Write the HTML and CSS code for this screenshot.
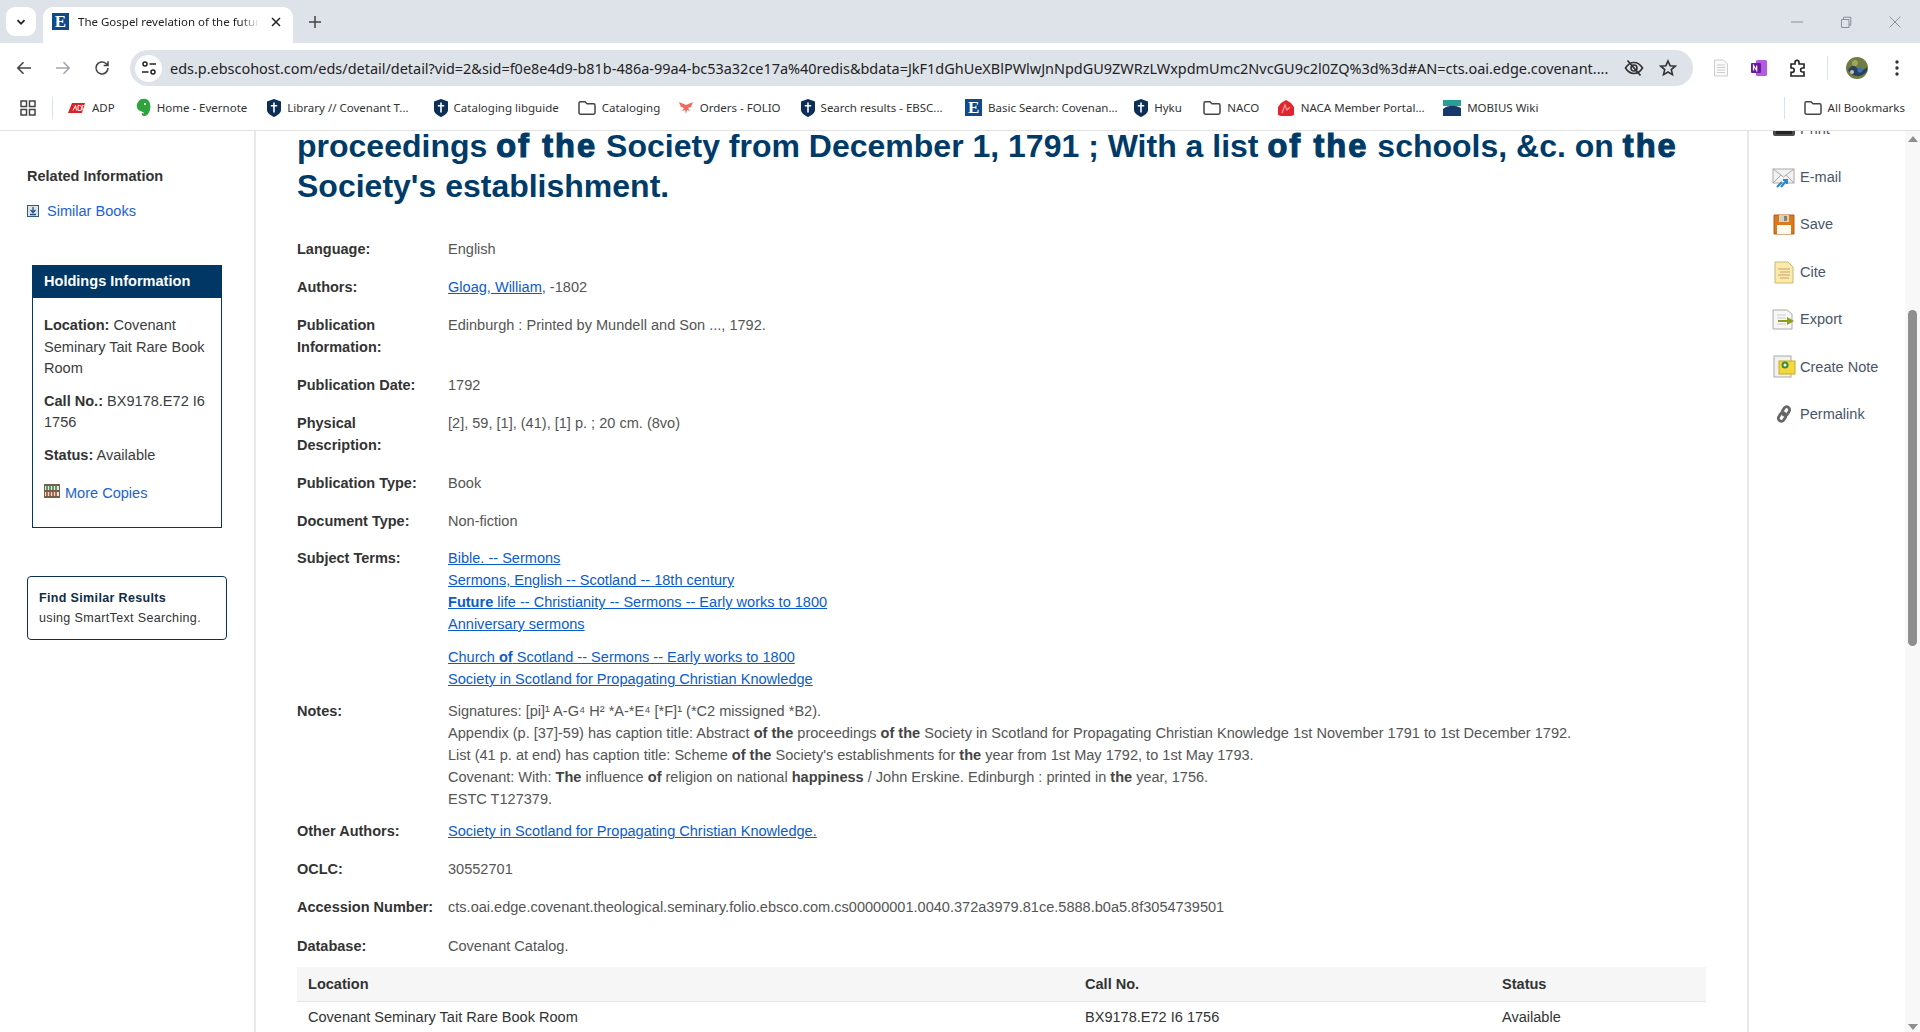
FILE: index.html
```html
<!DOCTYPE html>
<html lang="en">
<head>
<meta charset="utf-8">
<title>The Gospel revelation of the future</title>
<link rel="stylesheet" href="styles.css">
</head>
<body>
<svg class="defs" width="0" height="0" aria-hidden="true">
  <symbol id="shield" viewBox="0 0 14 18"><path d="M7 0 L14 2.5 V11 C14 14.5 10 16.5 7 18 C4 16.5 0 14.5 0 11 V2.5Z" fill="#0d2f55"/><path d="M6.2 3.5h1.6v2.6h2.4v1.5H7.8v6H6.2v-6H3.8V6.1h2.4z" fill="#fff"/></symbol>
  <symbol id="folder" viewBox="0 0 18 16"><path d="M1 3.2C1 2.3 1.6 1.8 2.4 1.8H7l2 2h6.6c.8 0 1.4.6 1.4 1.4v7.6c0 .8-.6 1.4-1.4 1.4H2.4C1.6 14.2 1 13.6 1 12.8Z" fill="none" stroke="#444" stroke-width="1.5"/></symbol>
</svg>
<header class="chrome">
  <div class="tabstrip">
    <button class="tabsearch"><svg width="12" height="12" viewBox="0 0 12 12"><path d="M2.5 4.2 6 7.8l3.5-3.6" fill="none" stroke="#1f1f1f" stroke-width="1.8"/></svg></button>
    <div class="tab">
      <span class="favicon">E</span>
      <span class="tabtitle">The Gospel revelation of the future happiness</span>
      <svg class="tabclose" width="12" height="12" viewBox="0 0 12 12"><path d="M2 2l8 8M10 2l-8 8" stroke="#222" stroke-width="1.5"/></svg>
    </div>
    <svg class="newtab" width="14" height="14" viewBox="0 0 14 14"><path d="M7 1v12M1 7h12" stroke="#444" stroke-width="1.5"/></svg>
    <div class="winctl">
      <svg width="14" height="14" viewBox="0 0 14 14"><path d="M1 7h12" stroke="#8a8f98" stroke-width="1"/></svg>
      <svg width="14" height="14" viewBox="0 0 14 14"><path d="M2.5 4.5h7.5v8H2.5zM4.5 4.5V2.2h7.3v8H10" fill="none" stroke="#8a8f98" stroke-width="1"/></svg>
      <svg width="14" height="14" viewBox="0 0 14 14"><path d="M1.5 1.5l11 11M12.5 1.5l-11 11" stroke="#8a8f98" stroke-width="1"/></svg>
    </div>
  </div>
  <div class="toolbar">
    <div class="navicons">
      <svg width="18" height="18" viewBox="0 0 18 18"><path d="M16 9H3M8.5 3.2 2.8 9l5.7 5.8" fill="none" stroke="#444" stroke-width="1.6"/></svg>
      <svg width="18" height="18" viewBox="0 0 18 18"><path d="M2 9h13M9.5 3.2 15.2 9l-5.7 5.8" fill="none" stroke="#a3a6aa" stroke-width="1.6"/></svg>
      <svg width="18" height="18" viewBox="0 0 18 18"><path d="M15 9a6 6 0 1 1-1.8-4.3L15 6.5M15 2.2v4.3h-4.3" fill="none" stroke="#444" stroke-width="1.6"/></svg>
    </div>
    <div class="omnibox">
      <span class="siteinfo"><svg width="16" height="16" viewBox="0 0 16 16"><circle cx="4" cy="4" r="2" fill="none" stroke="#222" stroke-width="1.5"/><path d="M8.5 4H15M1 12h6.5" stroke="#222" stroke-width="1.5"/><circle cx="12" cy="12" r="2" fill="none" stroke="#222" stroke-width="1.5"/></svg></span>
      <span class="url">eds.p.ebscohost.com/eds/detail/detail?vid=2&amp;sid=f0e8e4d9-b81b-486a-99a4-bc53a32ce17a%40redis&amp;bdata=JkF1dGhUeXBlPWlwJnNpdGU9ZWRzLWxpdmUmc2NvcGU9c2l0ZQ%3d%3d#AN=cts.oai.edge.covenant....</span>
      <svg class="omni-eye" width="20" height="18" viewBox="0 0 20 18"><path d="M1.5 9C4 5 7 3.5 10 3.5S16 5 18.5 9C16 13 13 14.5 10 14.5S4 13 1.5 9Z" fill="none" stroke="#333" stroke-width="1.6"/><circle cx="10" cy="9" r="3" fill="none" stroke="#333" stroke-width="1.6"/><path d="M3.5 1.5l13 15" stroke="#333" stroke-width="1.8"/></svg>
      <svg class="omni-star" width="18" height="18" viewBox="0 0 18 18"><path d="M9 2l2.1 4.7 5.1.5-3.9 3.4 1.2 5L9 13l-4.5 2.6 1.2-5-3.9-3.4 5.1-.5z" fill="none" stroke="#333" stroke-width="1.6"/></svg>
    </div>
    <div class="exticons">
      <svg width="16" height="18" viewBox="0 0 16 18"><path d="M1.5 1h9l4 4v12h-13z" fill="#fafafa" stroke="#ccc"/><path d="M4 6h8M4 8.5h8M4 11h8M4 13.5h8" stroke="#ccc"/></svg>
      <svg width="18" height="18" viewBox="0 0 18 18"><rect x="6" y="1" width="11" height="16" rx="1.5" fill="#b05be0"/><rect x="1" y="4" width="10" height="10" rx="1" fill="#6a1b9a"/><path d="M3.5 11.5v-5l3.2 5v-5" fill="none" stroke="#fff" stroke-width="1.2"/></svg>
      <svg width="18" height="18" viewBox="0 0 18 18"><path d="M2 5h4V3.4a2 2 0 0 1 4 0V5h5v4h-1.4a2 2 0 0 0 0 4H15v4H2v-3.6h1a2.2 2.2 0 0 0 0-4.4H2Z" fill="none" stroke="#222" stroke-width="1.6"/></svg>
      <span class="vsep"></span>
      <svg class="avatar" width="22" height="22" viewBox="0 0 22 22"><circle cx="11" cy="11" r="11" fill="#6f7d45"/><path d="M2 13c3-5 6-5 9-2s6 3 10-1v4a11 11 0 0 1-19-1Z" fill="#27425f"/><circle cx="9" cy="6" r="3" fill="#a7a35c"/><circle cx="14" cy="13" r="2.6" fill="#3d6fb8"/><circle cx="6" cy="15" r="2" fill="#c8c2b0"/></svg>
      <svg width="4" height="16" viewBox="0 0 4 16"><circle cx="2" cy="2" r="1.7" fill="#333"/><circle cx="2" cy="8" r="1.7" fill="#333"/><circle cx="2" cy="14" r="1.7" fill="#333"/></svg>
    </div>
  </div>
  <nav class="bookmarks">
    <span class="bm-apps"><svg width="16" height="16" viewBox="0 0 16 16"><path d="M1 1h5.5v5.5H1zM9.5 1H15v5.5H9.5zM1 9.5h5.5V15H1zM9.5 9.5H15V15H9.5z" fill="none" stroke="#444" stroke-width="1.5"/></svg></span>
    <span class="bm-sep"></span>
    <a class="bm"><svg width="18" height="12" viewBox="0 0 18 12"><path d="M4 1h13l-3 10H0Z" fill="#d8232a"/><path d="M5 8.5 7.5 3.5 8.5 8.5M10 3.5v5h1.6a2.3 2.5 0 0 0 0-5ZM14 8.5v-5h1.5" fill="none" stroke="#fff" stroke-width="1"/></svg>ADP</a>
    <a class="bm"><svg width="16" height="20" viewBox="0 0 16 20"><path d="M4 3C5 .5 10 0 13 2c2 2 3 6 2 10-1 3-3 6-5 6-3 .5-4-2-3-3l2 .5c0-2-4-2-6-4C1.500 9 1 6 4 3Z" fill="#2fa43c"/><circle cx="10" cy="6" r="1" fill="#fff"/></svg>Home - Evernote</a>
    <a class="bm"><svg width="14" height="18"><use href="#shield"/></svg>Library // Covenant T...</a>
    <a class="bm"><svg width="14" height="18"><use href="#shield"/></svg>Cataloging libguide</a>
    <a class="bm"><svg width="18" height="16"><use href="#folder"/></svg>Cataloging</a>
    <a class="bm"><svg width="16" height="14" viewBox="0 0 16 14"><path d="M8 4 1 1l2 5 3 1-2 3 3-1 1 4 1-4 3 1-2-3 3-1 2-5Z" fill="#ef6b5f"/></svg>Orders - FOLIO</a>
    <a class="bm"><svg width="14" height="18"><use href="#shield"/></svg>Search results - EBSC...</a>
    <a class="bm"><span class="favicon">E</span>Basic Search: Covenan...</a>
    <a class="bm"><svg width="14" height="18"><use href="#shield"/></svg>Hyku</a>
    <a class="bm"><svg width="18" height="16"><use href="#folder"/></svg>NACO</a>
    <a class="bm"><svg width="18" height="18" viewBox="0 0 18 18"><path d="M9 1l5 3 3 4v8l-3 1H4l-3-1V8l3-4Z" fill="#e3262e"/><path d="M5 14l3-8 2 5 3-3" fill="none" stroke="#f7a0a0" stroke-width="1.2"/></svg>NACA Member Portal...</a>
    <a class="bm"><svg width="18" height="18" viewBox="0 0 18 18"><rect y="1" width="18" height="6" fill="#2a9d94"/><path d="M0 17V10C5 6 12 6 18 9v8Z" fill="#17386a"/></svg>MOBIUS Wiki</a>
    <span class="bm-sep bm-sep-right"></span>
    <a class="bm"><svg width="18" height="16"><use href="#folder"/></svg>All Bookmarks</a>
  </nav>
</header>

<div class="page">
  <aside class="leftcol">
    <h3 class="rel-title">Related Information</h3>
    <a class="similar"><svg width="12" height="12" viewBox="0 0 12 12"><rect x=".5" y=".5" width="11" height="11" fill="#dbe4ec" stroke="#2d5b84"/><path d="M6 2v5M3.500 5 6 7.500 8.500 5M3 9.500h6" fill="none" stroke="#244f78" stroke-width="1.300"/></svg>Similar Books</a>
    <section class="holdings">
      <h4 class="holdings-head">Holdings Information</h4>
      <div class="holdings-body">
        <p><b>Location:</b> Covenant Seminary Tait Rare Book Room</p>
        <p><b>Call No.:</b> BX9178.E72 I6 1756</p>
        <p><b>Status:</b> Available</p>
        <p class="more"><svg width="16" height="14" viewBox="0 0 16 14"><rect width="16" height="14" fill="#74604a"/><path d="M1 2h14v4H1zM1 8h14v4H1z" fill="#e9e4d8"/><path d="M3 2v4M6 2v4M9 2v4M12 2v4" stroke="#2e7d4f" stroke-width="1.500"/><path d="M3 8v4M6 8v4M9 8v4M12 8v4" stroke="#a83a2a" stroke-width="1.500"/></svg><a>More Copies</a></p>
      </div>
    </section>
    <div class="findsim"><b>Find Similar Results</b><br>using SmartText Searching.</div>
  </aside>

  <main class="center">
    <h1 class="title">proceedings <b>of the</b> Society from December 1, 1791 ; With a list <b>of the</b> schools, &amp;c. on <b>the</b> Society's establishment.</h1>
    <dl class="meta">
      <div class="row"><dt>Language:</dt><dd>English</dd></div>
      <div class="row"><dt>Authors:</dt><dd><a>Gloag, William,</a> -1802</dd></div>
      <div class="row"><dt>Publication Information:</dt><dd>Edinburgh : Printed by Mundell and Son ..., 1792.</dd></div>
      <div class="row"><dt>Publication Date:</dt><dd>1792</dd></div>
      <div class="row"><dt>Physical Description:</dt><dd>[2], 59, [1], (41), [1] p. ; 20 cm. (8vo)</dd></div>
      <div class="row"><dt>Publication Type:</dt><dd>Book</dd></div>
      <div class="row before-subject"><dt>Document Type:</dt><dd>Non-fiction</dd></div>
      <div class="row tight"><dt>Subject Terms:</dt><dd>
        <a>Bible. -- Sermons</a><br>
        <a>Sermons, English -- Scotland -- 18th century</a><br>
        <a><b>Future</b> life -- Christianity -- Sermons -- Early works to 1800</a><br>
        <a>Anniversary sermons</a>
        <div class="subgroup"><a>Church <b>of</b> Scotland -- Sermons -- Early works to 1800</a><br>
        <a>Society in Scotland for Propagating Christian Knowledge</a></div>
      </dd></div>
      <div class="row tight"><dt>Notes:</dt><dd>
        Signatures: [pi]¹ A-G⁴ H² *A-*E⁴ [*F]¹ (*C2 missigned *B2).<br>
        Appendix (p. [37]-59) has caption title: Abstract <b>of the</b> proceedings <b>of the</b> Society in Scotland for Propagating Christian Knowledge 1st November 1791 to 1st December 1792.<br>
        List (41 p. at end) has caption title: Scheme <b>of the</b> Society's establishments for <b>the</b> year from 1st May 1792, to 1st May 1793.<br>
        Covenant: With: <b>The</b> influence <b>of</b> religion on national <b>happiness</b> / John Erskine. Edinburgh : printed in <b>the</b> year, 1756.<br>
        ESTC T127379.
      </dd></div>
      <div class="row"><dt>Other Authors:</dt><dd><a>Society in Scotland for Propagating Christian Knowledge.</a></dd></div>
      <div class="row"><dt>OCLC:</dt><dd>30552701</dd></div>
      <div class="row"><dt>Accession Number:</dt><dd>cts.oai.edge.covenant.theological.seminary.folio.ebsco.com.cs00000001.0040.372a3979.81ce.5888.b0a5.8f3054739501</dd></div>
      <div class="row dbrow"><dt>Database:</dt><dd>Covenant Catalog.</dd></div>
    </dl>
    <div class="copies">
      <div class="copies-head"><span>Location</span><span>Call No.</span><span>Status</span></div>
      <div class="copies-row"><span>Covenant Seminary Tait Rare Book Room</span><span>BX9178.E72 I6 1756</span><span>Available</span></div>
    </div>
  </main>

  <aside class="tools">
    <a class="tool tool-print"><svg width="24" height="24" viewBox="0 0 24 24"><rect x="5" y="0" width="14" height="10" fill="#eee" stroke="#999"/><rect x="1" y="8" width="22" height="11" rx="2" fill="#4a4a4a"/><rect x="4" y="14" width="16" height="3" fill="#222"/></svg>Print</a>
    <a class="tool"><svg width="24" height="24" viewBox="0 0 24 24"><rect x="1" y="4" width="21" height="14" fill="#f2f2f2" stroke="#aaa"/><path d="M1 4l10.500 8L22 4M1 18l8-8M22 18l-8-8" fill="none" stroke="#aaa"/><path d="M5 22l5-5M9 22l6-7M11 15h4v4" fill="none" stroke="#2a86c8" stroke-width="2"/></svg>E-mail</a>
    <a class="tool"><svg width="24" height="24" viewBox="0 0 24 24"><path d="M2 3h20v19H2z" fill="#d97a1e" stroke="#b85f10"/><rect x="7" y="3" width="10" height="7" fill="#d5cfc4"/><rect x="12" y="4" width="3" height="5" fill="#8a7f70"/><rect x="5" y="13" width="14" height="9" fill="#fdf9ef"/></svg>Save</a>
    <a class="tool"><svg width="24" height="24" viewBox="0 0 24 24"><path d="M3 2h13l5 5v16H3z" fill="#fbeaa8" stroke="#c8b878"/><path d="M6 9h12M8 12h10M6 15h12M8 18h9" stroke="#d7b98a" stroke-width="1.500"/></svg>Cite</a>
    <a class="tool"><svg width="24" height="24" viewBox="0 0 24 24"><path d="M1 3h14l5 4v15H1z" fill="#f7f7f7" stroke="#aaa"/><path d="M5 8h9M5 11h9M5 17h9" stroke="#ccc"/><path d="M6 13h9V10l7 4-7 4v-3H6z" fill="#8f9f1c"/></svg>Export</a>
    <a class="tool"><svg width="24" height="24" viewBox="0 0 24 24"><rect x="2" y="1" width="17" height="21" fill="#f1f1f1" stroke="#aaa"/><rect x="7" y="6" width="16" height="13" fill="#f4d83e" stroke="#c9ab1e"/><circle cx="13" cy="10" r="3.500" fill="#3a8f2f"/><circle cx="13" cy="10" r="1.500" fill="#fff"/></svg>Create Note</a>
    <a class="tool"><svg width="24" height="24" viewBox="0 0 24 24"><g fill="none" stroke="#666" stroke-width="2.800" transform="rotate(-58 12 12)"><rect x="4" y="9" width="9" height="6" rx="3"/><rect x="11" y="9" width="9" height="6" rx="3"/></g></svg>Permalink</a>
  </aside>

  <div class="scrollbar">
    <span class="arrow-up"></span>
    <span class="thumb"></span>
    <span class="arrow-down"></span>
  </div>
</div>
</body>
</html>
```

FILE: styles.css
```css
* { box-sizing: border-box; }
html, body { margin: 0; height: 100%; overflow: hidden; background: #fff; }
body { font-family: "Liberation Sans", Arial, sans-serif; font-size: 14.56px; color: #444; display: flex; flex-direction: column; height: 1032px; }
.defs { position: absolute; }
p, h1, h3, h4, dl, dd { margin: 0; }

/* browser chrome */
.chrome { flex: none; font-family: "Noto Sans", "Open Sans", sans-serif; }
.tabstrip { height: 43px; background: #dee3ea; display: flex; align-items: flex-start; padding-left: 6px; }
.tabsearch { width: 30px; height: 29px; margin-top: 7px; border: 0; border-radius: 9px; background: #fff; display: flex; align-items: center; justify-content: center; padding: 0; }
.tab { width: 250px; height: 36px; margin: 7px 0 0 7px; background: #fff; border-radius: 10px 10px 0 0; display: flex; align-items: center; padding: 0 10px 7px 9px; }
.favicon { flex: none; width: 17px; height: 17px; background: #0f4a8a; color: #fff; font: bold 17px/17px "Liberation Serif", serif; text-align: center; display: inline-block; overflow: hidden; }
.tabtitle { width: 181px; margin-left: 9px; font-size: 11.5px; color: #222; white-space: nowrap; overflow: hidden; mask-image: linear-gradient(90deg, #000 90%, transparent); -webkit-mask-image: linear-gradient(90deg, #000 90%, transparent); }
.tabclose { margin-left: 11px; }
.newtab { margin: 15px 0 0 15px; }
.winctl { margin-left: auto; display: flex; gap: 35px; padding: 15px 18px 0 0; }

.toolbar { height: 43px; background: #fff; display: flex; align-items: flex-start; border-radius: 10px 10px 0 0; margin-top: 0; padding-top: 7px; }
.navicons { width: 130px; height: 36px; display: flex; align-items: center; gap: 21px; padding-left: 15px; }
.omnibox { width: 1563px; height: 36px; background: #dee3ea; border-radius: 18px; display: flex; align-items: center; padding-left: 5px; }
.siteinfo { flex: none; width: 27px; height: 27px; background: #fff; border-radius: 50%; display: flex; align-items: center; justify-content: center; }
.url { margin-left: 8px; width: 1438px; font-size: 14.45px; color: #222; white-space: nowrap; overflow: hidden; }
.omni-eye { margin-left: 16px; }
.omni-star { margin-left: 15px; }
.exticons { flex: 1; height: 36px; display: flex; align-items: center; padding-left: 20px; }
.exticons svg:nth-child(1) { margin-right: 21px; }
.exticons svg:nth-child(2) { margin-right: 21px; }
.vsep { width: 1px; height: 24px; background: #d3e3fd; margin: 0 18px 0 20px; }
.avatar { margin-right: 27px; }

.bookmarks { height: 45px; background: #fff; border-bottom: 1px solid #e2e2e2; display: flex; align-items: center; padding-bottom: 1px; font-size: 11.5px; color: #333; white-space: nowrap; }
.bm-apps { width: 52px; padding-left: 20px; display: flex; }
.bm-sep { width: 1px; height: 22px; background: #d3e3fd; margin-right: 15px; }
.bm { display: inline-flex; align-items: center; gap: 6px; margin-right: 20px; }
.bm:nth-of-type(3) { margin-right: 25px; }
.bm:nth-of-type(4) { margin-right: 19px; }
.bm:nth-of-type(5) { margin-right: 17.5px; }
.bm:nth-of-type(7) { margin-right: 22.5px; }
.bm:nth-of-type(8) { margin-right: 16.5px; }
.bm:nth-of-type(9) { margin-right: 21.5px; }
.bm:nth-of-type(10) { margin-right: 17.5px; }
.bm:nth-of-type(11) { margin-right: 18.5px; }
.bm-sep-right { margin-left: auto; margin-right: 19px; }
.bm:last-child { margin-right: 15px; }

/* page */
.page { flex: 1; min-height: 0; display: flex; overflow: hidden; }
.leftcol { flex: none; width: 256px; border-right: 2px solid #e8e8e8; padding: 35px 0 0 27px; }
.rel-title { font-size: 14.5px; line-height: 20px; color: #333; font-weight: bold; }
.similar { display: flex; align-items: center; gap: 8px; margin-top: 15px; line-height: 20px; color: #1b63d0; }
.holdings { width: 190px; height: 263px; margin: 44px 0 0 5px; border: 1px solid #003764; }
.holdings-head { height: 32px; background: #003764; color: #fff; font-size: 14.56px; line-height: 30px; padding-left: 11px; }
.holdings-body { padding: 17px 11px 0 11px; line-height: 21.500px; color: #3c3c3c; }
.holdings-body p { margin-bottom: 11px; }
.holdings-body b { color: #333; }
.holdings-body .more { margin-top: 17px; }
.more svg { margin-right: 5px; }
.more a { color: #1b63d0; }
.findsim { width: 200px; height: 64px; margin-top: 48px; border: 1.500px solid #0d2f4f; border-radius: 4px; padding: 11px 11px 0; font-size: 12.5px; line-height: 20px; color: #333; letter-spacing: .35px; white-space: nowrap; }
.findsim b { color: #0f2c48; }

.center { flex: none; width: 1491px; padding: 0 42px 0 41px; overflow: hidden; }
.title { margin-top: -5px; font-size: 32px; line-height: 40px; font-weight: bold; color: #003b68; }
.title b { font-size: 32.5px; line-height: 1; -webkit-text-stroke: 1.2px #003b68; letter-spacing: 2.1px; }
.meta { margin-top: 32px; }
.row { display: flex; margin-bottom: 16px; line-height: 22px; }
.row.tight { margin-bottom: 10px; }
.row.before-subject { margin-bottom: 15px; }
.dbrow { margin-bottom: 10px; margin-top: 17px; }
dt { flex: none; width: 151px; padding-right: 12px; font-weight: bold; font-size: 14.5px; color: #333; }
dd { color: #555; flex: 1; white-space: nowrap; }
dd b { color: #444; }
dd a { color: #0b5ccb; text-decoration: underline; }
dd a b { color: #0b5ccb; }
.subgroup { margin-top: 11px; }
.copies { width: 1409px; }
.copies-head, .copies-row { display: grid; grid-template-columns: 777px 417px 1fr; padding-left: 11px; }
.copies-head { height: 35px; align-items: center; background: #f6f6f6; border-bottom: 1px solid #e5e5e5; font-weight: bold; color: #333; }
.copies-row { height: 30px; align-items: center; color: #333; }

.tools { flex: none; width: 158px; border-left: 2px solid #e8e8e8; padding: 0 0 0 23px; overflow: hidden; }
.tool { display: flex; align-items: center; gap: 4px; height: 47.500px; color: #4a5568; }
.tool svg { flex: none; }
.tool-print { margin-top: -25.500px; }

.scrollbar { flex: none; width: 15px; background: #f8f8f8; position: relative; }
.thumb { position: absolute; left: 3px; width: 9px; top: 179px; height: 336px; background: #8f8f8f; border-radius: 5px; }
.arrow-up { position: absolute; left: 3px; top: 5px; border: 5px solid transparent; border-top: 0; border-bottom: 6px solid #8f8f8f; }
.arrow-down { position: absolute; left: 3px; bottom: 2px; border: 5px solid transparent; border-bottom: 0; border-top: 6px solid #8f8f8f; }
```
